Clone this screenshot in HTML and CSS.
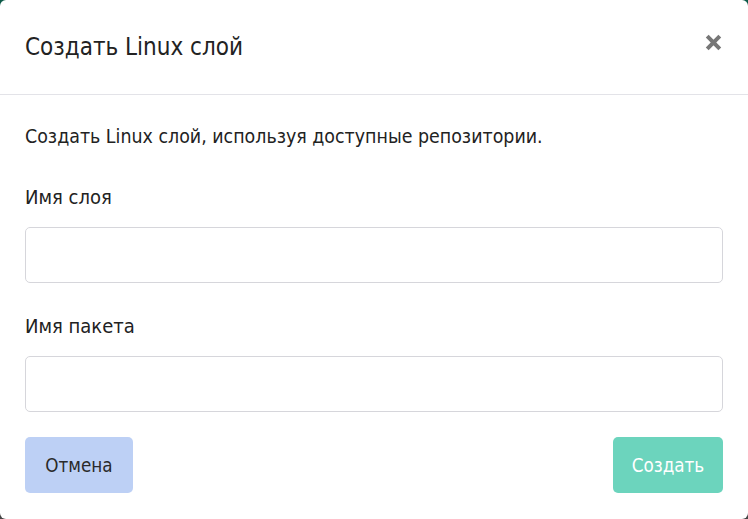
FILE: index.html
```html
<!DOCTYPE html>
<html lang="ru">
<head>
<meta charset="utf-8">
<title>Создать Linux слой</title>
<link rel="stylesheet" href="styles.css">
</head>
<body>
<div class="modal">
  <div class="modal-header">
    <h2 class="modal-title">Создать Linux слой</h2>
    <button class="close" aria-label="Закрыть">
      <svg width="17" height="17" viewBox="0 0 17 17"><path d="M2.2 2.2 L14.8 14.8 M14.8 2.2 L2.2 14.8" stroke="#777" stroke-width="4" stroke-linecap="butt"/></svg>
    </button>
  </div>
  <div class="modal-body">
    <p class="intro">Создать Linux слой, используя доступные репозитории.</p>
    <label class="label first">Имя слоя</label>
    <input class="field" type="text">
    <label class="label">Имя пакета</label>
    <input class="field" type="text">
    <div class="actions">
      <button class="btn btn-cancel">Отмена</button>
      <button class="btn btn-create">Создать</button>
    </div>
  </div>
</div>
</body>
</html>
```
FILE: styles.css
```css
html {
  background: linear-gradient(to bottom, #0d5a48 0%, #0d5a48 50%, #454545 50%, #454545 100%);
  height: 100%;
}
body {
  margin: 0;
  font-family: "DejaVu Sans Condensed", "Liberation Sans", sans-serif;
  color: #222;
}
.modal {
  width: 748px;
  height: 519px;
  background: #fff;
  border-radius: 6px;
  box-sizing: border-box;
  overflow: hidden;
}
.modal-header {
  height: 95px;
  box-sizing: border-box;
  border-bottom: 1px solid #e3e3e8;
  display: flex;
  align-items: center;
  justify-content: space-between;
  padding: 0 26px 0 25px;
}
.modal-title {
  margin: 0;
  font-weight: normal;
  font-size: 24px;
  line-height: 30px;
  color: #222;
}
.close {
  border: 0;
  background: none;
  padding: 0;
  width: 17px;
  height: 17px;
  display: flex;
  margin-top: -10px;
}
.modal-body {
  padding: 27px 25px 0 25px;
  display: flex;
  flex-direction: column;
}
.intro {
  margin: 0;
  font-size: 19.4px;
  line-height: 30px;
}
.label {
  font-size: 20px;
  line-height: 30px;
  margin-top: 28px;
  margin-bottom: 15px;
}
.label.first {
  margin-top: 30px;
}
.field {
  height: 56px;
  box-sizing: border-box;
  border: 1px solid #d6d6db;
  border-radius: 5px;
  width: 100%;
  margin: 0;
  font-family: inherit;
  font-size: 18px;
  padding: 0 12px;
}
.actions {
  margin-top: 25px;
  display: flex;
  justify-content: space-between;
}
.btn {
  height: 56px;
  border: 0;
  border-radius: 5px;
  font-family: inherit;
  font-size: 18.7px;
  padding: 0;
}
.btn-cancel {
  background: #bdd0f5;
  color: #2a2a2a;
  width: 108px;
}
.btn-create {
  background: #6cd4bd;
  color: #fff;
  width: 110px;
}
```
